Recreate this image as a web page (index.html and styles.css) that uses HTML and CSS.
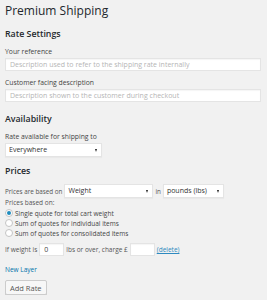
FILE: index.html
```html
<!DOCTYPE html>
<html lang="en">
<head>
    <meta charset="UTF-8">
    <title>Premium Shipping</title>
    <link rel="stylesheet" href="styles.css">
</head>
<body>
    <div class="wrap">
        <h2 class="page-title">Premium Shipping</h2>

        <h3>Rate Settings</h3>
        <label class="field-label">Your reference</label>
        <input class="text-input wide" type="text" placeholder="Description used to refer to the shipping rate internally">

        <label class="field-label">Customer facing description</label>
        <input class="text-input wide" type="text" placeholder="Description shown to the customer during checkout">

        <h3>Availability</h3>
        <label class="field-label">Rate available for shipping to</label>
        <div class="select sel-region">Everywhere</div>

        <h3>Prices</h3>
        <div class="row based-on">
            <span>Prices are based on</span>
            <div class="select sel-weight">Weight</div>
            <span class="in">in</span>
            <div class="select sel-unit">pounds (lbs)</div>
        </div>

        <div class="small-label">Prices based on:</div>
        <ul class="radios">
            <li><span class="radio checked"></span>Single quote for total cart weight</li>
            <li><span class="radio"></span>Sum of quotes for individual items</li>
            <li><span class="radio"></span>Sum of quotes for consolidated items</li>
        </ul>

        <div class="row layer">
            <span>If weight is</span>
            <input class="text-input short" type="text" value="0">
            <span>lbs or over, charge £</span>
            <input class="text-input short" type="text">
            <a href="#" class="delete">(delete)</a>
        </div>

        <a href="#" class="new-layer">New Layer</a>

        <button class="button">Add Rate</button>
    </div>
</body>
</html>
```

FILE: styles.css
```css
* {
    margin: 0;
    padding: 0;
    box-sizing: border-box;
}

body {
    font-family: "Open Sans", sans-serif;
    background: #f1f1f1;
    color: #444;
    font-size: 6.5px;
}

.wrap {
    padding: 2px 5px 0 5px;
    display: flex;
    flex-direction: column;
    align-items: flex-start;
}

.page-title {
    font-size: 12px;
    font-weight: 400;
    color: #23282d;
    line-height: 17px;
    margin-bottom: 9px;
}

h3 {
    font-size: 8.8px;
    font-weight: 600;
    color: #23282d;
    line-height: 12px;
    margin-bottom: 7px;
}

.field-label {
    font-size: 6.8px;
    line-height: 9px;
    color: #444;
    margin-bottom: 2px;
}

.text-input {
    font-family: "Open Sans", sans-serif;
    font-size: 7px;
    height: 13px;
    padding: 0 4px;
    border: 1px solid #e4e4e4;
    background: #fff;
    color: #444;
    box-shadow: inset 0 1px 1px rgba(0, 0, 0, 0.04);
    outline: none;
}

.text-input::placeholder {
    color: #b5b5b5;
}

.text-input.wide {
    width: 256px;
    margin-bottom: 7px;
}

.text-input.wide + h3 {
    margin-top: 4px;
}

.text-input.short {
    width: 25px;
}

.select {
    position: relative;
    height: 14px;
    line-height: 12px;
    padding: 0 3px;
    font-size: 7px;
    color: #333;
    background: #fff;
    border: 1px solid #e4e4e4;
    box-shadow: 0 1px 1px rgba(0, 0, 0, 0.03);
}

.select::after {
    content: '';
    position: absolute;
    right: 4px;
    top: 5px;
    border-left: 1.5px solid transparent;
    border-right: 1.5px solid transparent;
    border-top: 3px solid #222;
}

.sel-region {
    width: 97px;
    margin-bottom: 8px;
}

.sel-weight {
    width: 89px;
}

.sel-unit {
    width: 61px;
}

.row {
    display: flex;
    align-items: center;
    gap: 2px;
    color: #555;
}

.based-on {
    font-size: 6.3px;
    margin-bottom: 0;
}

.small-label {
    color: #555;
    line-height: 9px;
    margin-bottom: 1px;
}

.radios {
    list-style: none;
    margin-bottom: 5px;
}

.radios li {
    display: flex;
    align-items: center;
    gap: 2px;
    height: 10px;
    color: #444;
}

.radio {
    width: 8px;
    height: 8px;
    border-radius: 50%;
    border: 1px solid #c4c4c4;
    background: #fff;
    position: relative;
}

.radio.checked::after {
    content: '';
    position: absolute;
    left: 1px;
    top: 1px;
    width: 4px;
    height: 4px;
    border-radius: 50%;
    background: #1e8cbe;
}

.layer {
    margin-bottom: 9px;
}

.delete {
    color: #2e8ac0;
    text-decoration: underline;
}

.new-layer {
    color: #0073aa;
    text-decoration: none;
    line-height: 9px;
    margin-bottom: 6px;
}

.button {
    font-family: "Open Sans", sans-serif;
    font-size: 7.5px;
    color: #555;
    height: 15px;
    padding: 0 4px;
    background: #f7f7f7;
    border: 1px solid #ccc;
    border-radius: 2px;
    box-shadow: 0 1px 0 #ccc;
}
```
